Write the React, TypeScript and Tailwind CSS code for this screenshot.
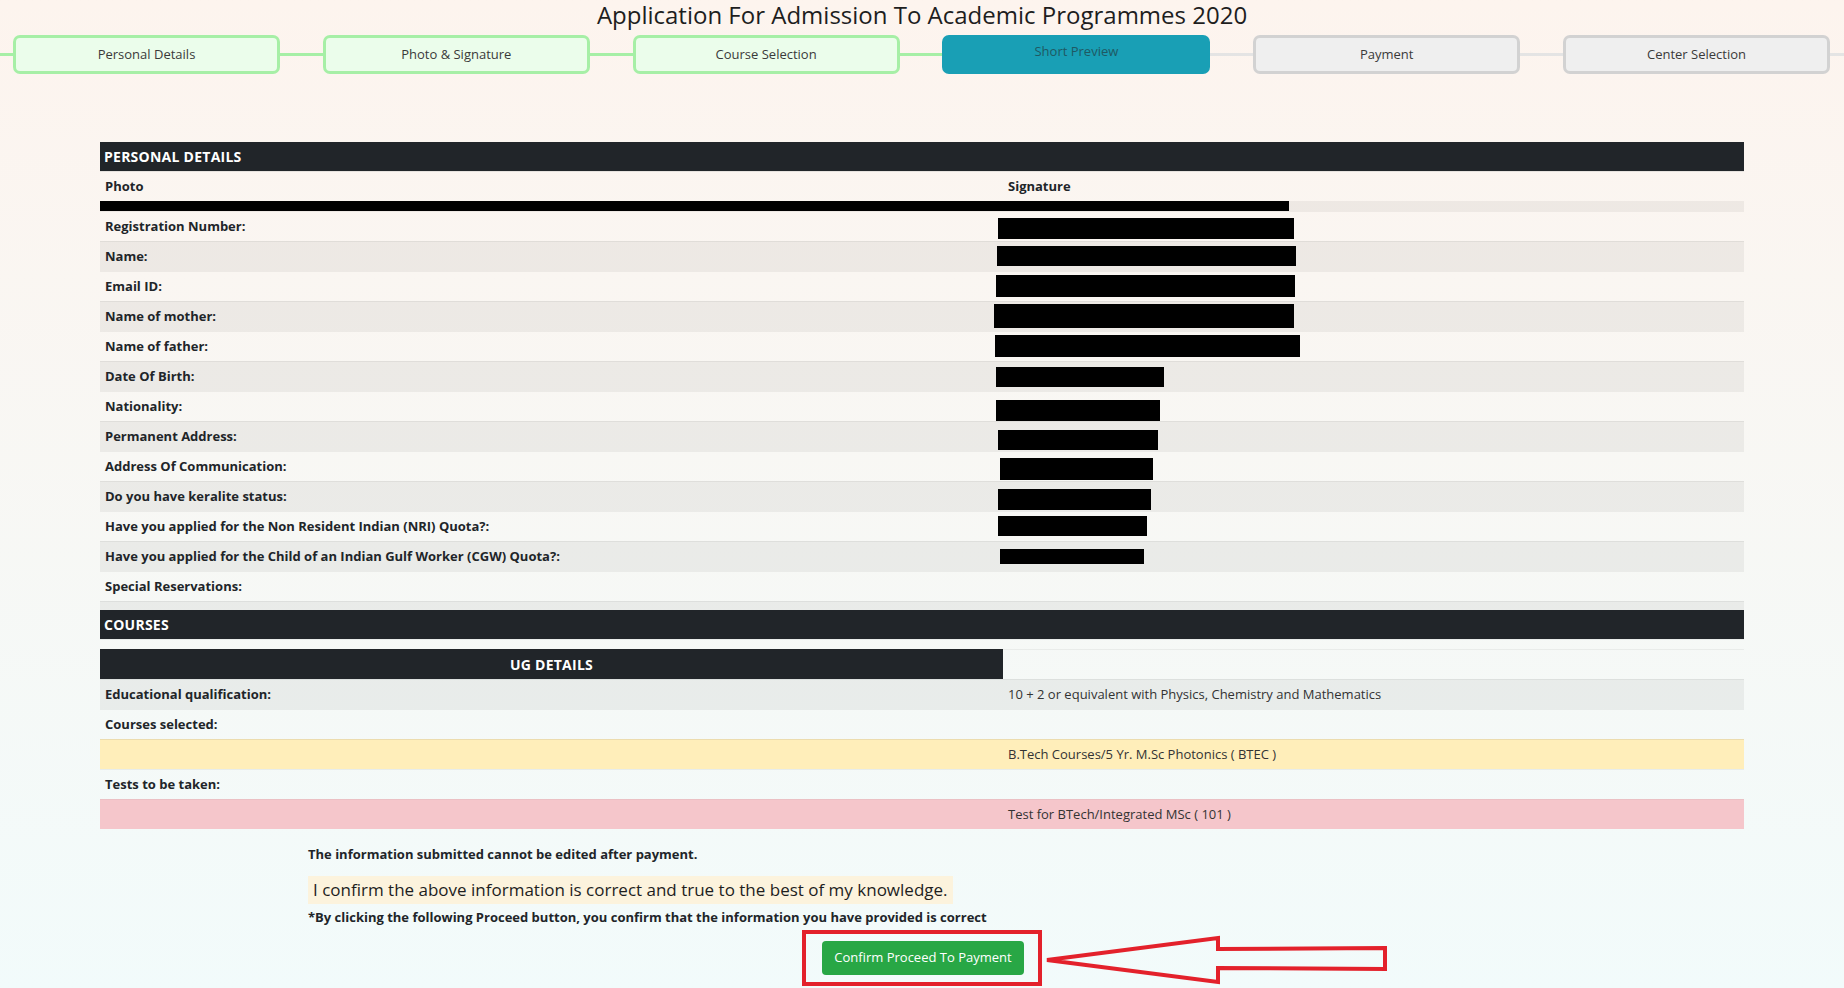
import React from "react";

type Step = { label: string; state: "done" | "active" | "todo" };

const steps: Step[] = [
  { label: "Personal Details", state: "done" },
  { label: "Photo & Signature", state: "done" },
  { label: "Course Selection", state: "done" },
  { label: "Short Preview", state: "active" },
  { label: "Payment", state: "todo" },
  { label: "Center Selection", state: "todo" },
];

type Row = { label: string; mx?: number; w?: number; mt?: number; h?: number };

// redaction boxes: x offset relative to the second column start, width, top offset and height
const personalRows: Row[] = [
  { label: "Registration Number:", mx: -5, w: 296, mt: 6, h: 21 },
  { label: "Name:", mx: -6, w: 299, mt: 4, h: 20 },
  { label: "Email ID:", mx: -7, w: 299, mt: 3, h: 22 },
  { label: "Name of mother:", mx: -9, w: 300, mt: 2, h: 24 },
  { label: "Name of father:", mx: -8, w: 305, mt: 3, h: 22 },
  { label: "Date Of Birth:", mx: -7, w: 168, mt: 5, h: 20 },
  { label: "Nationality:", mx: -7, w: 164, mt: 8, h: 21 },
  { label: "Permanent Address:", mx: -5, w: 160, mt: 8, h: 20 },
  { label: "Address Of Communication:", mx: -3, w: 153, mt: 6, h: 22 },
  { label: "Do you have keralite status:", mx: -5, w: 153, mt: 7, h: 21 },
  { label: "Have you applied for the Non Resident Indian (NRI) Quota?:", mx: -5, w: 149, mt: 4, h: 20 },
  { label: "Have you applied for the Child of an Indian Gulf Worker (CGW) Quota?:", mx: -3, w: 144, mt: 7, h: 15 },
  { label: "Special Reservations:" },
];

function StepBox({ step }: { step: Step }) {
  if (step.state === "active") {
    return (
      <div className="w-[268px] h-[39px] shrink-0 rounded-[7px] bg-[#199fb5] flex justify-center pt-[7px] text-[13px] leading-[18px] text-[#1f5963]">
        {step.label}
      </div>
    );
  }
  if (step.state === "done") {
    return (
      <div className="w-[267px] h-[39px] shrink-0 rounded-[7px] border-[3px] border-[#a6efa6] bg-[#ebfdeb] flex items-center justify-center text-[13px] text-[#3a3a3a]">
        {step.label}
      </div>
    );
  }
  return (
    <div className="w-[267px] h-[39px] shrink-0 rounded-[7px] border-[3px] border-[#d2d2d2] bg-[#efefef] flex items-center justify-center text-[13px] text-[#3a3a3a]">
      {step.label}
    </div>
  );
}

function Stepper() {
  return (
    <div className="flex items-center h-[39px] mt-[5px]">
      <div className="w-[13px] h-[3px] bg-[#a6efa6]" />
      <StepBox step={steps[0]} />
      <div className="flex-1 h-[3px] bg-[#a6efa6]" />
      <StepBox step={steps[1]} />
      <div className="flex-1 h-[3px] bg-[#a6efa6]" />
      <StepBox step={steps[2]} />
      <div className="flex-1 h-[3px] bg-[#a6efa6]" />
      <StepBox step={steps[3]} />
      <div className="flex-1 h-[3px] bg-[#e4e4e4]" />
      <StepBox step={steps[4]} />
      <div className="flex-1 h-[3px] bg-[#e4e4e4]" />
      <StepBox step={steps[5]} />
      <div className="w-[14px] h-[3px] bg-[#e4e4e4]" />
    </div>
  );
}

function DarkHeader({ children }: { children: React.ReactNode }) {
  return (
    <div className="h-[29px] bg-[#212529] flex items-center pl-[4px] text-[14px] font-bold text-white tracking-[0.25px]">
      {children}
    </div>
  );
}

export default function App() {
  return (
    <div className="min-h-[988px] w-full bg-gradient-to-b from-[#fdf4ee] to-[#f2fbfb] font-['Open_Sans',sans-serif] text-[#212529] relative">
      <h1 className="text-center text-[24px] leading-[30px] text-[#1e1e1e]">
        Application For Admission To Academic Programmes 2020
      </h1>
      <Stepper />

      <div className="mx-[100px] mt-[68px]">
        <DarkHeader>PERSONAL DETAILS</DarkHeader>
        <div className="grid grid-cols-[903px_1fr] h-[30px] items-center border-t border-[#e6e2de] text-[13px] font-bold">
          <div className="pl-[5px]">Photo</div>
          <div className="pl-[5px]">Signature</div>
        </div>
        <div className="h-[10px] bg-black/5 flex">
          <div className="w-[1189px] h-full bg-black" />
        </div>
        {personalRows.map((r, i) => (
          <div
            key={r.label}
            className={`flex h-[30px] border-t border-black/5 text-[13px] font-bold ${i % 2 === 1 ? "bg-black/5" : ""}`}
          >
            <div className="w-[903px] shrink-0 pl-[5px] flex items-center">{r.label}</div>
            {r.w ? (
              <div
                className="bg-black shrink-0"
                style={{ marginLeft: r.mx, width: r.w, marginTop: r.mt, height: r.h }}
              />
            ) : null}
          </div>
        ))}
        <div className="h-[9px] bg-black/5 border-t border-black/5" />
        <DarkHeader>COURSES</DarkHeader>
        <div className="h-[10px] border-t border-black/5" />
        <div className="grid grid-cols-[903px_1fr] h-[30px]">
          <div className="bg-[#212529] flex items-center justify-center text-[14px] font-bold text-white tracking-[0.25px]">
            UG DETAILS
          </div>
          <div className="border-t border-black/5" />
        </div>
        <div className="grid grid-cols-[903px_1fr] h-[30px] items-center bg-black/5 border-t border-black/5 text-[13px]">
          <div className="pl-[5px] font-bold">Educational qualification:</div>
          <div className="pl-[5px] text-[#333]">10 + 2 or equivalent with Physics, Chemistry and Mathematics</div>
        </div>
        <div className="grid grid-cols-[903px_1fr] h-[30px] items-center border-t border-black/5 text-[13px]">
          <div className="pl-[5px] font-bold">Courses selected:</div>
          <div />
        </div>
        <div className="grid grid-cols-[903px_1fr] h-[30px] items-center bg-[#ffeeba] border-t border-[#ecdcae] text-[13px]">
          <div />
          <div className="pl-[5px] text-[#333]">B.Tech Courses/5 Yr. M.Sc Photonics ( BTEC )</div>
        </div>
        <div className="grid grid-cols-[903px_1fr] h-[30px] items-center border-t border-black/5 text-[13px]">
          <div className="pl-[5px] font-bold">Tests to be taken:</div>
          <div />
        </div>
        <div className="grid grid-cols-[903px_1fr] h-[30px] items-center bg-[#f5c6cb] border-t border-[#ebc0c4] text-[13px]">
          <div />
          <div className="pl-[5px] text-[#333]">Test for BTech/Integrated MSc ( 101 )</div>
        </div>
      </div>

      <div className="w-[1228px] mx-auto mt-[16px]">
        <p className="text-[13px] leading-[18px] font-bold">
          The information submitted cannot be edited after payment.
        </p>
        <div className="mt-[13px] inline-block bg-[#fcf3dd] px-[5px] text-[17px] leading-[28px] text-[#1e1e1e]">
          I confirm the above information is correct and true to the best of my knowledge.
        </div>
        <p className="mt-[3px] text-[13px] leading-[20px] font-bold">
          *By clicking the following Proceed button, you confirm that the information you have provided is correct
        </p>
        <div className="flex justify-center mt-[3px]">
          <div className="border-[4px] border-[#e3212b] pl-[16px] pr-[14px] pt-[7px] pb-[7px]">
            <button className="w-[202px] h-[34px] rounded-[4px] bg-[#28a745] text-white text-[13px]">
              Confirm Proceed To Payment
            </button>
          </div>
        </div>
      </div>

      <svg
        className="absolute left-[1040px] top-[930px]"
        width="356"
        height="58"
        viewBox="1040 930 356 58"
      >
        <polygon
          points="1047,960 1218,938 1218,949 1385,948 1385,969 1218,968 1218,982"
          fill="none"
          stroke="#e3212b"
          strokeWidth="4"
          strokeLinejoin="miter"
        />
      </svg>
    </div>
  );
}
